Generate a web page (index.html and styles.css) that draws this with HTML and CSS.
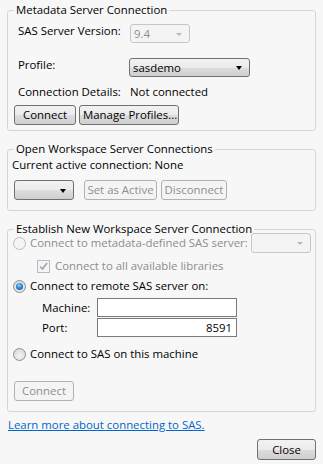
FILE: index.html
```html
<!doctype html>
<html>
  <head>
    <meta charset="UTF-8" />
    <title>SAS Connection</title>
    <link rel="stylesheet" href="styles.css">
  </head>

  <body>
    <div class="dialog">
      <fieldset class="group group-metadata">
        <legend>Metadata Server Connection</legend>
        <div class="field-row row-version">
          <span class="label">SAS Server Version:</span>
          <div class="combo combo-disabled combo-version">
            <span class="combo-text">9.4</span>
            <span class="arrow"></span>
          </div>
        </div>
        <div class="field-row row-profile">
          <span class="label">Profile:</span>
          <div class="combo combo-profile">
            <span class="combo-text">sasdemo</span>
            <span class="arrow"></span>
          </div>
        </div>
        <div class="field-row row-details">
          <span class="label">Connection Details:</span>
          <span class="value">Not connected</span>
        </div>
        <div class="button-row">
          <button class="btn btn-connect">Connect</button>
          <button class="btn btn-manage">Manage Profiles...</button>
        </div>
      </fieldset>

      <fieldset class="group group-open">
        <legend>Open Workspace Server Connections</legend>
        <p class="current">Current active connection: None</p>
        <div class="open-row">
          <div class="combo combo-empty">
            <span class="combo-text"></span>
            <span class="arrow"></span>
          </div>
          <button class="btn btn-disabled btn-active" disabled>Set as Active</button>
          <button class="btn btn-disabled btn-disconnect" disabled>Disconnect</button>
        </div>
      </fieldset>

      <fieldset class="group group-new">
        <legend>Establish New Workspace Server Connection</legend>
        <div class="option-row row-metadata">
          <span class="radio radio-disabled"></span>
          <span class="option-text text-disabled">Connect to metadata-defined SAS server:</span>
          <div class="combo combo-disabled combo-server">
            <span class="combo-text"></span>
            <span class="arrow"></span>
          </div>
        </div>
        <div class="option-row row-libraries">
          <span class="checkbox checkbox-disabled">
            <svg width="11" height="11" viewBox="0 0 11 11">
              <path d="M2 5.5 L4.5 8 L9 2" fill="none" stroke="#9aa3ae" stroke-width="1.6" />
            </svg>
          </span>
          <span class="option-text text-disabled">Connect to all available libraries</span>
        </div>
        <div class="option-row row-remote">
          <span class="radio radio-checked"></span>
          <span class="option-text">Connect to remote SAS server on:</span>
        </div>
        <div class="input-row row-machine">
          <span class="input-label">Machine:</span>
          <input class="text-input" type="text" value="" />
        </div>
        <div class="input-row row-port">
          <span class="input-label">Port:</span>
          <input class="text-input input-port" type="text" value="8591" />
        </div>
        <div class="option-row row-local">
          <span class="radio"></span>
          <span class="option-text">Connect to SAS on this machine</span>
        </div>
        <button class="btn btn-disabled btn-new-connect" disabled>Connect</button>
      </fieldset>

      <a class="learn-link" href="#">Learn more about connecting to SAS.</a>
      <button class="btn btn-close">Close</button>
    </div>
  </body>
</html>
```

FILE: styles.css
```css
*,
*::before,
*::after {
  margin: 0;
  padding: 0;
  box-sizing: border-box;
}

body {
  width: 323px;
  height: 464px;
  overflow: hidden;
  background-color: #f7f7f7;
  color: #000;
  font-family: "Open Sans", "Noto Sans", sans-serif;
  font-size: 11.4px;
  line-height: 16px;
}

.dialog {
  display: flex;
  flex-direction: column;
  padding: 2px 7px 0;
}

/* group boxes */
.group {
  min-width: 0;
  border: 1px solid #d3d7da;
  border-radius: 3px;
  padding: 6px 6px 5px;
}

.group legend {
  padding: 0 2px;
  line-height: 16px;
}

.group-open {
  margin-top: 10px;
  padding: 0 6px 10px;
}

.group-new {
  margin-top: 10px;
  padding: 0 4px 10px 6px;
}

/* metadata rows */
.field-row {
  display: flex;
  align-items: flex-start;
}

.field-row .label {
  width: 116px;
  padding-left: 4px;
  margin-top: -1px;
}

.row-profile {
  margin-top: 15px;
}

.row-details {
  margin-top: 7px;
}

.row-details .label {
  margin-top: 0;
}

.row-profile .combo {
  margin-left: -1px;
}

.button-row {
  display: flex;
  gap: 3px;
  margin-top: 5px;
}

/* combo boxes */
.combo {
  display: flex;
  align-items: center;
  height: 19px;
  padding: 1px 7px 0 3px;
  border: 1px solid #707070;
  border-radius: 3px;
  background-image: linear-gradient(180deg, #f2f2f2 0%, #ebebeb 50%, #dddddd 51%, #cfcfcf 100%);
}

.combo-text {
  flex: 1;
  line-height: 16px;
}

.arrow {
  width: 0;
  height: 0;
  border-left: 3.5px solid transparent;
  border-right: 3.5px solid transparent;
  border-top: 4px solid #000;
}

.combo-disabled {
  border-color: #c4c7ca;
  background-image: none;
  background-color: #f4f4f4;
  color: #8d8d8d;
}

.combo-disabled .arrow {
  border-top-color: #b4b8bc;
  border-left-width: 3px;
  border-right-width: 3px;
  border-top-width: 3px;
}

.combo-version {
  width: 60px;
}

.combo-profile {
  width: 121px;
}

.combo-empty {
  width: 60px;
  height: 20px;
}

.combo-server {
  width: 60px;
  height: 20px;
  margin-left: auto;
}

/* buttons */
.btn {
  height: 20px;
  padding: 0 3px;
  border: 1px solid #707070;
  border-radius: 3px;
  background-image: linear-gradient(180deg, #f2f2f2 0%, #ebebeb 50%, #dddddd 51%, #cfcfcf 100%);
  color: #000;
  font-family: inherit;
  font-size: inherit;
  line-height: 16px;
  white-space: nowrap;
}

.btn-connect {
  width: 62px;
}

.btn-manage {
  width: 100px;
}

.btn-disabled {
  border-color: #adb2b5;
  background-image: none;
  background-color: #f4f4f4;
  color: #8f8f8f;
}

/* open workspace */
.current {
  margin-left: -2px;
}

.open-row {
  display: flex;
  margin-top: 7px;
}

.btn-active {
  width: 73px;
  margin-left: 10px;
  padding: 0 1px;
}

.btn-disconnect {
  width: 66px;
  margin-left: 4px;
  padding: 0 1px;
}

/* new connection */
.option-row {
  display: flex;
  align-items: center;
  height: 16px;
}

.row-metadata {
  height: 20px;
  margin-top: -4px;
}

.row-libraries {
  margin-top: 5px;
  padding-left: 23px;
}

.row-remote {
  margin-top: 4px;
}

.row-local {
  margin-top: 9px;
}

.option-text {
  margin-left: 4px;
  white-space: nowrap;
}

.text-disabled {
  color: #8d8d8d;
}

.radio {
  flex: none;
  width: 13px;
  height: 13px;
  margin-left: -1px;
  border: 1px solid #8e8f8f;
  border-radius: 50%;
  background-image: radial-gradient(circle at 50% 60%, #f4f4f4 0%, #e2e2e2 55%, #cfcfcf 100%);
  display: flex;
  align-items: center;
  justify-content: center;
}

.radio-disabled {
  border-color: #b8bcc0;
  background-image: none;
  background-color: #f4f4f4;
}

.radio-checked::after {
  content: "";
  width: 7px;
  height: 7px;
  border-radius: 50%;
  background-image: radial-gradient(circle at 45% 35%, #8fd3ff 0%, #2c8ad8 45%, #0c4f8f 100%);
}

.checkbox {
  flex: none;
  width: 13px;
  height: 13px;
  border: 1px solid #b8bcc0;
  background-color: #f4f4f4;
  display: flex;
  align-items: center;
  justify-content: center;
}

.row-libraries .option-text {
  margin-left: 5px;
}

.input-row {
  display: flex;
  align-items: center;
  padding-left: 28px;
}

.row-machine {
  margin-top: 4px;
}

.row-port {
  margin-top: 1px;
}

.input-label {
  width: 55px;
}

.text-input {
  width: 140px;
  height: 19px;
  padding: 0 4px;
  border: 1px solid #7a7a7a;
  background-color: #fff;
  font-family: inherit;
  font-size: inherit;
  color: #000;
}

.input-port {
  text-align: right;
}

.btn-new-connect {
  align-self: flex-start;
  width: 60px;
  margin-top: 19px;
}

/* footer */
.learn-link {
  align-self: flex-start;
  margin: 5px 0 0 1px;
  color: #0066cc;
  text-decoration: underline;
}

.btn-close {
  align-self: flex-end;
  width: 59px;
  height: 21px;
  margin-top: 6px;
}
```
